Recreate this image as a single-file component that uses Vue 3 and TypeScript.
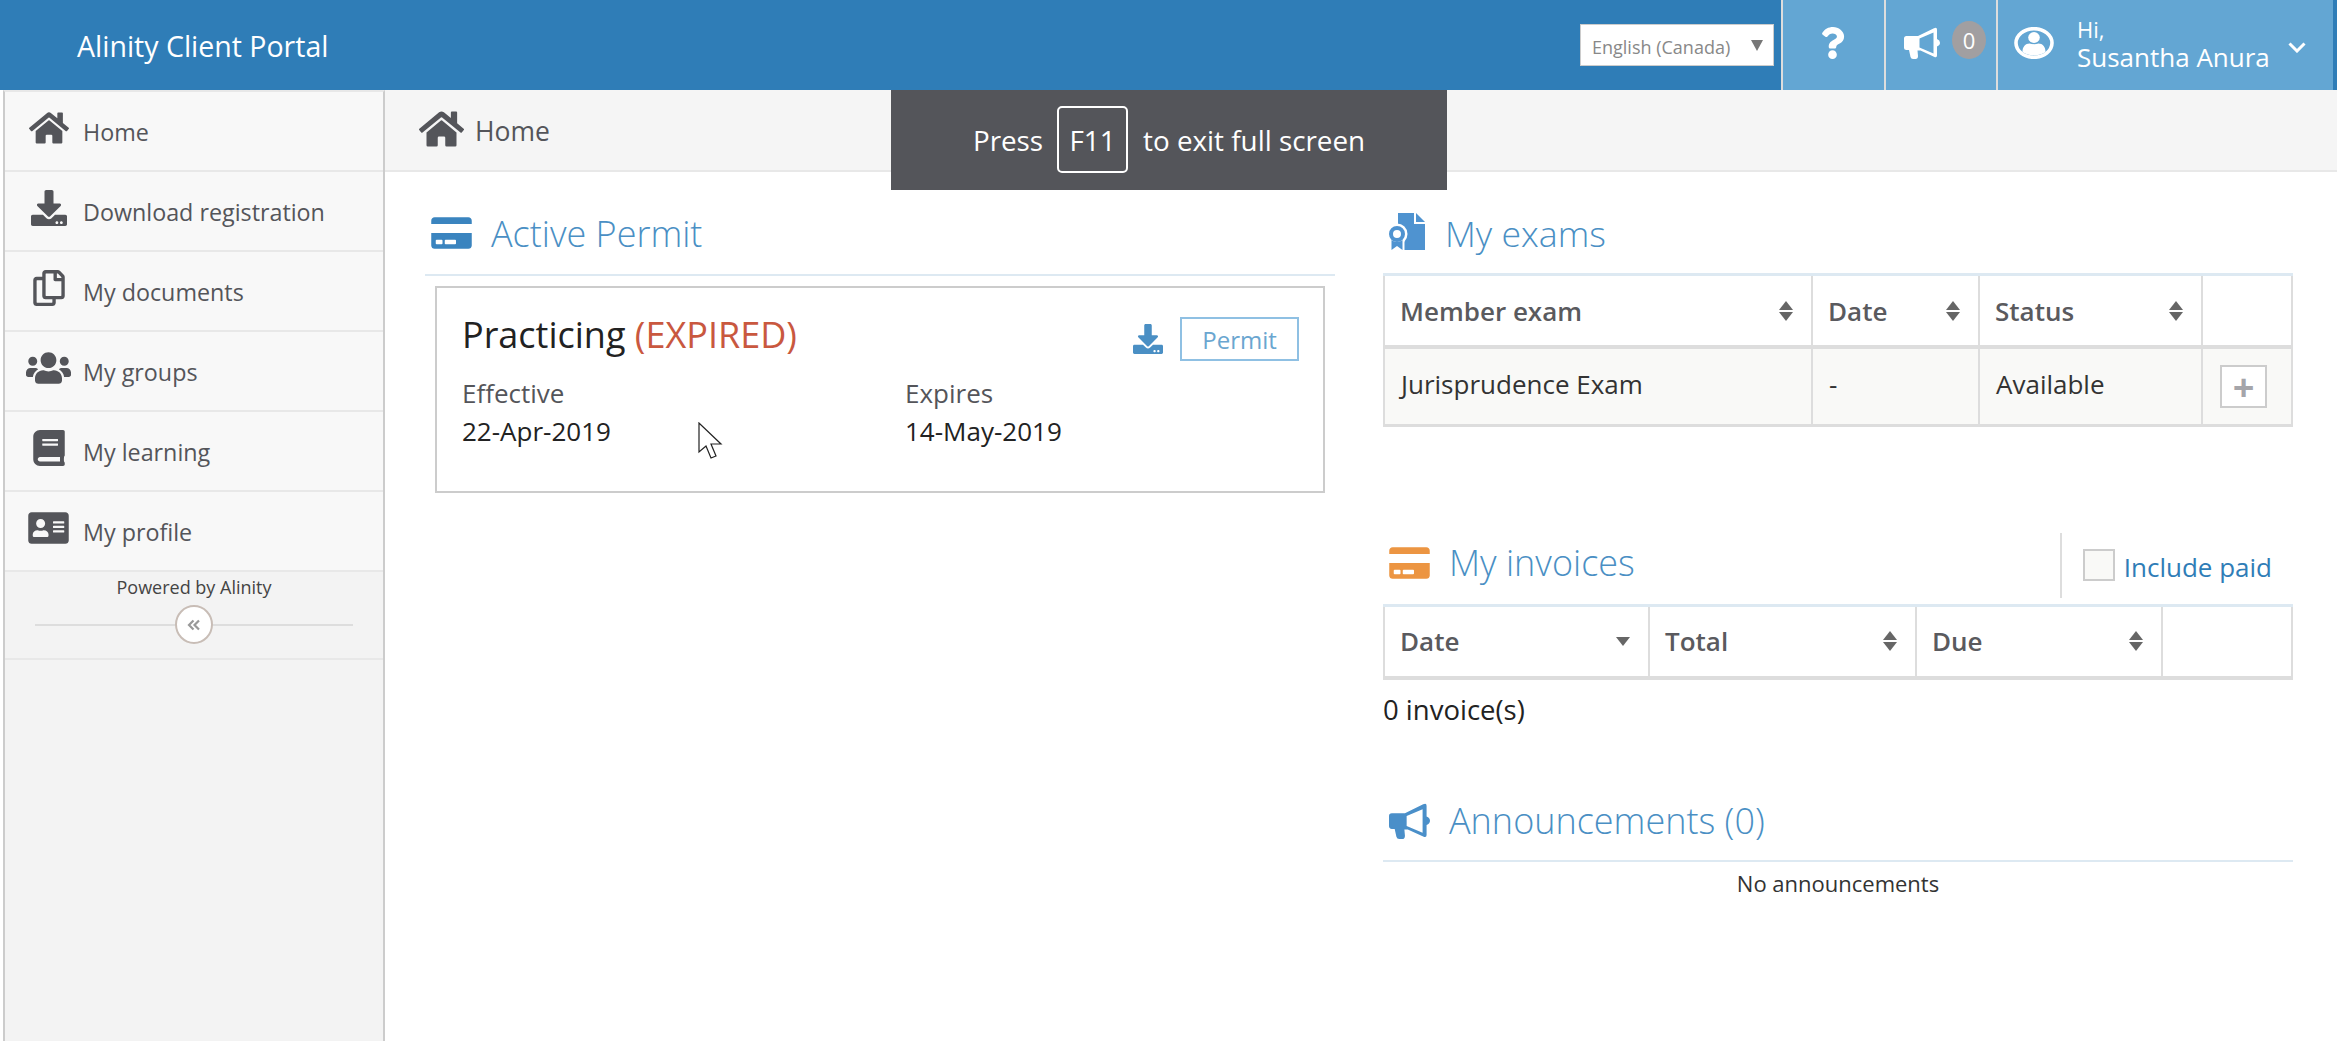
<template>
  <div class="page">
    <header class="topbar">
      <div class="brand">Alinity Client Portal</div>
      <div class="lang">
        <select>
          <option>English (Canada)</option>
        </select>
      </div>
      <div class="top-panel">
        <div class="top-cell help">
          <svg class="ic-help" viewBox="0 0 384 512"><path :d="icons.question" /></svg>
        </div>
        <div class="top-cell notes">
          <svg class="ic-horn" viewBox="0 0 36 32" preserveAspectRatio="none"><path fill-rule="evenodd" :d="horn" /></svg>
          <span class="badge">0</span>
        </div>
        <div class="top-cell user">
          <svg class="ic-user" viewBox="0 0 40 32" preserveAspectRatio="none">
            <ellipse cx="20" cy="16" rx="18" ry="14.300" fill="none" stroke="#fff" stroke-width="3.600" />
            <ellipse cx="20" cy="10.500" rx="5.800" ry="5.400" fill="#fff" />
            <path d="M8.500 25c0-5.500 3-8.500 7-8.500 2.500 1 6.500 1 9 0 4 0 7 3 7 8.500-6.500 4.500-16.500 4.500-23 0z" fill="#fff" />
          </svg>
          <div class="user-name">
            <span>Hi,</span>
            <span>Susantha Anura</span>
          </div>
          <svg class="ic-chev" viewBox="0 0 18 11"><path d="M1.500 1.500 9 9l7.500-7.500" /></svg>
        </div>
      </div>
    </header>

    <div class="body">
      <aside class="sidebar">
        <nav>
          <a v-for="item in menu" :key="item.label" class="nav-item">
            <span class="nav-icon">
              <svg :style="{ width: item.w + 'px' }" :viewBox="item.box"><path :d="item.d" /></svg>
            </span>
            {{ item.label }}
          </a>
        </nav>
        <div class="powered">
          <div>Powered by Alinity</div>
          <div class="collapse">
            <span class="collapse-btn">
              <svg viewBox="0 0 14 12"><path d="M6.500 1.500 2 6l4.500 4.500M12 1.500 7.500 6l4.500 4.500" /></svg>
            </span>
          </div>
        </div>
      </aside>

      <main class="main">
        <div class="crumb">
          <svg class="crumb-icon" viewBox="0 0 576 512"><path :d="icons.home" /></svg>
          Home
        </div>

        <div class="columns">
          <section class="col">
            <div class="head head-line permit-head">
              <svg class="h-icon card" viewBox="0 0 576 512"><path :d="icons.card" /></svg>
              <h2>Active Permit</h2>
            </div>
            <div class="permit">
              <div class="permit-top">
                <div class="permit-name">Practicing <span class="expired">(EXPIRED)</span></div>
                <svg class="permit-dl" viewBox="0 0 512 512"><path :d="icons.download" /></svg>
                <button class="permit-btn">Permit</button>
              </div>
              <div class="permit-dates">
                <div>
                  <div class="lbl">Effective</div>
                  <div class="val">22-Apr-2019</div>
                </div>
                <div>
                  <div class="lbl">Expires</div>
                  <div class="val">14-May-2019</div>
                </div>
              </div>
            </div>
          </section>

          <section class="col">
            <div class="head exams-head">
              <svg class="exam-icon" viewBox="0 0 36 37">
                <path d="M9 0h16v11h11v26H9z" />
                <path d="M27 0l9 9h-9z" />
                <circle cx="8" cy="21" r="10.500" fill="#fff" />
                <path d="M0.500 27h15v10.500h-15z" fill="#fff" />
                <path fill-rule="evenodd" d="M8 13a8 8 0 1 1 0 16 8 8 0 0 1 0-16zm0 4a4 4 0 1 0 0 8 4 4 0 0 0 0-8z" />
                <path d="M2.500 27c3 2.500 8 2.500 11 0v10L8 33l-5.500 4z" />
              </svg>
              <h2>My exams</h2>
            </div>
            <table class="grid exams">
              <colgroup>
                <col style="width: 428px" />
                <col style="width: 167px" />
                <col style="width: 223px" />
                <col />
              </colgroup>
              <thead>
                <tr>
                  <th v-for="h in examCols" :key="h"><div class="th"><span>{{ h }}</span><i class="sort"></i></div></th>
                  <th></th>
                </tr>
              </thead>
              <tbody>
                <tr>
                  <td>Jurisprudence Exam</td>
                  <td>-</td>
                  <td>Available</td>
                  <td class="add-cell"><span class="add">+</span></td>
                </tr>
              </tbody>
            </table>

            <div class="head invoices-head">
              <svg class="h-icon orange" viewBox="0 0 576 512"><path :d="icons.card" /></svg>
              <h2>My invoices</h2>
              <label class="paid"><input type="checkbox" />Include paid</label>
            </div>
            <table class="grid invoices">
              <colgroup>
                <col style="width: 265px" />
                <col style="width: 267px" />
                <col style="width: 246px" />
                <col />
              </colgroup>
              <thead>
                <tr>
                  <th><div class="th"><span>Date</span><i class="sort-down"></i></div></th>
                  <th><div class="th"><span>Total</span><i class="sort"></i></div></th>
                  <th><div class="th"><span>Due</span><i class="sort"></i></div></th>
                  <th></th>
                </tr>
              </thead>
            </table>
            <div class="count">0 invoice(s)</div>

            <div class="head head-line notes-head">
              <svg class="h-icon horn" viewBox="0 0 36 32" preserveAspectRatio="none"><path fill-rule="evenodd" :d="horn" /></svg>
              <h2>Announcements (0)</h2>
            </div>
            <div class="none">No announcements</div>
          </section>
        </div>
      </main>
    </div>

    <!-- browser overlay, sits over the page -->
    <div class="fullscreen-tip">Press <kbd>F11</kbd> to exit full screen</div>

    <svg class="cursor" viewBox="0 0 25 38">
      <path d="M1 1v29l7-6 5 12 5-2-5-12h10z" fill="#fff" stroke="#222" stroke-width="1.200" />
    </svg>
  </div>
</template>

<script setup lang="ts">
const icons = {
  home: 'M280.37 148.26L96 300.11V464a16 16 0 0 0 16 16l112.06-.29a16 16 0 0 0 15.92-16V368a16 16 0 0 1 16-16h64a16 16 0 0 1 16 16v95.64a16 16 0 0 0 16 16.05L464 480a16 16 0 0 0 16-16V300L295.67 148.26a12.19 12.19 0 0 0-15.3 0zM571.6 251.47L488 182.56V44.05a12 12 0 0 0-12-12h-56a12 12 0 0 0-12 12v72.61L318.47 43a48 48 0 0 0-61 0L4.34 251.47a12 12 0 0 0-1.6 16.9l25.5 31A12 12 0 0 0 45.15 301l235.22-193.74a12.19 12.19 0 0 1 15.3 0L530.9 301a12 12 0 0 0 16.9-1.6l25.5-31a12 12 0 0 0-1.7-16.93z',
  download: 'M216 0h80c13.3 0 24 10.7 24 24v168h87.7c17.8 0 26.7 21.5 14.1 34.1L269.7 378.3c-7.5 7.5-19.8 7.5-27.3 0L90.1 226.1c-12.6-12.6-3.7-34.1 14.1-34.1H192V24c0-13.3 10.7-24 24-24zm296 376v112c0 13.3-10.7 24-24 24H24c-13.3 0-24-10.7-24-24V376c0-13.3 10.7-24 24-24h146.7l49 49c20.1 20.1 52.5 20.1 72.6 0l49-49H488c13.3 0 24 10.7 24 24zm-124 88c0-11-9-20-20-20s-20 9-20 20 9 20 20 20 20-9 20-20zm64 0c0-11-9-20-20-20s-20 9-20 20 9 20 20 20 20-9 20-20z',
  copy: 'M433.941 65.941l-51.882-51.882A48 48 0 0 0 348.118 0H176c-26.51 0-48 21.49-48 48v48H48c-26.51 0-48 21.49-48 48v320c0 26.51 21.49 48 48 48h224c26.51 0 48-21.49 48-48v-48h80c26.51 0 48-21.49 48-48V99.882a48 48 0 0 0-14.059-33.941zM266 464H54a6 6 0 0 1-6-6V150a6 6 0 0 1 6-6h74v224c0 26.51 21.49 48 48 48h96v42a6 6 0 0 1-6 6zm128-96H182a6 6 0 0 1-6-6V54a6 6 0 0 1 6-6h106v88c0 13.255 10.745 24 24 24h88v202a6 6 0 0 1-6 6zm6-256h-64V48h9.632c1.591 0 3.117.632 4.243 1.757l48.368 48.368a6 6 0 0 1 1.757 4.243V112z',
  users: 'M96 224c35.3 0 64-28.7 64-64s-28.7-64-64-64-64 28.7-64 64 28.7 64 64 64zm448 0c35.3 0 64-28.7 64-64s-28.7-64-64-64-64 28.7-64 64 28.7 64 64 64zm32 32h-64c-17.6 0-33.5 7.1-45.1 18.6 40.3 22.1 68.9 62 75.1 109.4h66c17.7 0 32-14.3 32-32v-32c0-35.3-28.7-64-64-64zm-256 0c61.9 0 112-50.1 112-112S381.9 32 320 32 208 82.1 208 144s50.1 112 112 112zm76.8 32h-8.3c-20.8 10-43.9 16-68.5 16s-47.6-6-68.5-16h-8.3C179.6 288 128 339.6 128 403.2V432c0 26.5 21.5 48 48 48h288c26.5 0 48-21.5 48-48v-28.8c0-63.6-51.6-115.2-115.2-115.2zm-223.7-13.4C161.5 263.1 145.6 256 128 256H64c-35.3 0-64 28.7-64 64v32c0 17.7 14.3 32 32 32h65.9c6.3-47.4 34.9-87.3 75.2-109.4z',
  book: 'M448 360V24c0-13.3-10.7-24-24-24H96C43 0 0 43 0 96v320c0 53 43 96 96 96h328c13.3 0 24-10.7 24-24v-16c0-7.5-3.5-14.3-8.9-18.7-4.2-15.4-4.2-59.3 0-74.7 5.4-4.3 8.9-11.1 8.9-18.6zM128 134c0-3.3 2.7-6 6-6h212c3.3 0 6 2.7 6 6v20c0 3.3-2.7 6-6 6H134c-3.3 0-6-2.7-6-6v-20zm0 64c0-3.3 2.7-6 6-6h212c3.3 0 6 2.7 6 6v20c0 3.3-2.7 6-6 6H134c-3.3 0-6-2.7-6-6v-20zm253.4 250H96c-17.7 0-32-14.3-32-32 0-17.6 14.4-32 32-32h285.4c-1.9 17.1-1.9 46.9 0 64z',
  profile: 'M528 32H48C21.5 32 0 53.5 0 80v352c0 26.5 21.5 48 48 48h480c26.5 0 48-21.5 48-48V80c0-26.5-21.5-48-48-48zm-352 96c35.3 0 64 28.7 64 64s-28.7 64-64 64-64-28.7-64-64 28.7-64 64-64zm112 236.8c0 10.6-10 19.2-22.4 19.2H86.4C74 384 64 375.4 64 364.8v-19.2c0-31.8 30.1-57.6 67.2-57.6h5c12.3 5.1 25.7 8 39.8 8s27.6-2.9 39.8-8h5c37.1 0 67.2 25.8 67.2 57.6v19.2zM512 312c0 4.4-3.6 8-8 8H360c-4.4 0-8-3.6-8-8v-16c0-4.4 3.6-8 8-8h144c4.4 0 8 3.6 8 8v16zm0-64c0 4.4-3.6 8-8 8H360c-4.4 0-8-3.6-8-8v-16c0-4.4 3.6-8 8-8h144c4.4 0 8 3.6 8 8v16zm0-64c0 4.4-3.6 8-8 8H360c-4.4 0-8-3.6-8-8v-16c0-4.4 3.6-8 8-8h144c4.4 0 8 3.6 8 8v16z',
  card: 'M0 432c0 26.5 21.5 48 48 48h480c26.5 0 48-21.5 48-48V256H0v176zm192-68c0-6.6 5.4-12 12-12h136c6.6 0 12 5.4 12 12v40c0 6.6-5.4 12-12 12H204c-6.6 0-12-5.4-12-12v-40zm-128 0c0-6.6 5.4-12 12-12h72c6.6 0 12 5.4 12 12v40c0 6.6-5.4 12-12 12H76c-6.6 0-12-5.4-12-12v-40zM576 80v48H0V80c0-26.5 21.500-48 48-48h480c26.5 0 48 21.5 48 48z',
  question: 'M202.021 0C122.202 0 70.503 32.703 29.914 91.026c-7.363 10.58-5.093 25.086 5.178 32.874l43.138 32.709c10.373 7.865 25.132 6.026 33.253-4.148 25.049-31.381 43.63-49.449 82.757-49.449 30.764 0 68.816 19.799 68.816 49.631 0 22.552-18.617 34.134-48.993 51.164-35.423 19.86-82.299 44.576-82.299 106.405V320c0 13.255 10.745 24 24 24h72.471c13.255 0 24-10.745 24-24v-5.773c0-42.86 125.268-44.645 125.268-160.627C377.504 66.256 286.902 0 202.021 0zM192 373.459c-38.196 0-69.271 31.075-69.271 69.271 0 38.195 31.075 69.27 69.271 69.27s69.271-31.075 69.271-69.271-31.075-69.27-69.271-69.27z',
}

// the app's megaphone, wider than the usual bullhorn
const horn = 'M2.500 9H14L30 1.200Q33-.3 33 2.500V12q3 1.200 3 3.800T33 19.500V28.500q0 2.800-3 1.300L16.500 23.500H13.500L14 29q0 3-2.500 3H9q-2 0-2.500-2L5 23H2.500Q0 23 0 20.500V11.500Q0 9 2.500 9zM15.500 11.500V20.500L29.500 26.500V5.500z'

const menu = [
  { label: 'Home', d: icons.home, box: '0 0 576 512', w: 40 },
  { label: 'Download registration', d: icons.download, box: '0 0 512 512', w: 36 },
  { label: 'My documents', d: icons.copy, box: '0 0 448 512', w: 32 },
  { label: 'My groups', d: icons.users, box: '0 0 640 512', w: 45 },
  { label: 'My learning', d: icons.book, box: '0 0 448 512', w: 32 },
  { label: 'My profile', d: icons.profile, box: '0 0 576 512', w: 41 },
]

const examCols = ['Member exam', 'Date', 'Status']
</script>

<style>
html,
body {
  margin: 0;
  background: #fff;
}
</style>

<style scoped>
.page {
  position: relative;
  display: flex;
  flex-direction: column;
  height: 1041px;
  overflow: hidden;
  font-family: "Open Sans", "Noto Sans", sans-serif;
  color: #222;
}

/* top bar */
.topbar {
  display: flex;
  align-items: center;
  height: 90px;
  flex: none;
  padding-right: 4px;
  background: #2f7db7;
}
.brand {
  flex: 1;
  padding: 2px 0 0 77px;
  font-size: 28.500px;
  color: #fff;
}
.lang {
  position: relative;
  width: 194px;
  height: 42px;
  margin-right: 7px;
}
.lang select {
  appearance: none;
  width: 100%;
  height: 100%;
  padding: 3px 0 0 11px;
  border: 1px solid #ccc;
  border-radius: 0;
  background: #fff;
  font-family: inherit;
  font-size: 18px;
  color: #888;
}
.lang::after {
  content: "";
  position: absolute;
  top: 16px;
  right: 11px;
  border-left: 6px solid transparent;
  border-right: 6px solid transparent;
  border-top: 11px solid #777;
  pointer-events: none;
}
.top-panel {
  display: flex;
  align-self: stretch;
  width: 552px;
  background: #63a6d3;
  color: #fff;
}
.top-cell {
  display: flex;
  align-items: center;
  border-left: 2px solid #ddd;
}
.help {
  width: 101px;
  justify-content: center;
}
.ic-help {
  width: 25px;
  height: 32px;
  margin: -4px 2px 0 0;
  fill: #fff;
}
.notes {
  width: 112px;
  padding-left: 18px;
  box-sizing: border-box;
}
.ic-horn {
  width: 36px;
  height: 32px;
  fill: #fff;
  margin-top: -4px;
}
.badge {
  display: flex;
  align-items: center;
  justify-content: center;
  width: 34px;
  height: 38px;
  margin: -10px 0 0 12px;
  border-radius: 50%;
  background: #a19fa1;
  font-size: 22px;
}
.user {
  flex: 1;
  padding-left: 16px;
}
.ic-user {
  width: 40px;
  height: 32px;
  margin-top: -5px;
}
.user-name {
  display: flex;
  flex-direction: column;
  margin: -5px 0 0 23px;
  font-size: 26px;
  line-height: 28px;
}
.user-name span:first-child {
  font-size: 22px;
}
.ic-chev {
  width: 18px;
  height: 11px;
  margin: 4px 0 0 18px;
  fill: none;
  stroke: #fff;
  stroke-width: 3;
}

/* sidebar */
.body {
  display: flex;
  flex: 1;
  min-height: 0;
}
.sidebar {
  display: flex;
  flex-direction: column;
  flex: none;
  width: 382px;
  margin-left: 3px;
  box-sizing: border-box;
  border-top: 2px solid #e8e8e8;
  border-left: 2px solid #ccc;
  border-right: 2px solid #ccc;
  background: #f3f3f3;
}
.nav-item {
  display: flex;
  align-items: center;
  height: 80px;
  padding: 2px 0 0 19px;
  box-sizing: border-box;
  border-bottom: 2px solid #e8e8e8;
  background: #f8f8f8;
  font-size: 23.300px;
  color: #54555a;
}
.nav-icon {
  display: flex;
  justify-content: center;
  width: 57px;
  margin: -8px 6px 0 -4px;
}
.nav-icon svg {
  height: 36px;
  fill: #54555a;
}
.powered {
  height: 83px;
  border-bottom: 2px solid #e8e8e8;
  padding-top: 3px;
  text-align: center;
  font-size: 18px;
  line-height: 24px;
  color: #444;
}
.collapse {
  display: flex;
  justify-content: center;
  height: 40px;
  margin: 6px 30px 0;
  background: linear-gradient(#ddd, #ddd) center / 100% 2px no-repeat;
}
.collapse-btn {
  display: flex;
  align-items: center;
  justify-content: center;
  width: 38px;
  height: 39px;
  box-sizing: border-box;
  border: 2px solid #c8bdb6;
  border-radius: 50%;
  background: #fff;
}
.collapse-btn svg {
  width: 14px;
  height: 12px;
  fill: none;
  stroke: #999;
  stroke-width: 2.200;
}

/* main */
.main {
  flex: 1;
  min-width: 0;
}
.crumb {
  display: flex;
  align-items: center;
  height: 82px;
  padding: 2px 0 0 34px;
  box-sizing: border-box;
  border-bottom: 2px solid #e8e8e8;
  background: #f5f5f5;
  font-size: 26.500px;
  color: #54555a;
}
.crumb-icon {
  width: 45px;
  height: 40px;
  margin: -4px 11px 0 0;
  fill: #54555a;
}
.columns {
  display: grid;
  grid-template-columns: 910px 910px;
  gap: 48px;
  padding-left: 40px;
}
.head {
  display: flex;
  align-items: center;
  box-sizing: border-box;
}
h2 {
  margin: 0;
  font-size: 36px;
  font-weight: 300;
  color: #4a8fc4;
}
.head-line {
  border-bottom: 2px solid #dde9f2;
}
.permit-head {
  height: 104px;
  padding: 20px 0 0 6px;
}
.h-icon {
  width: 41px;
  height: 36px;
  margin-right: 19px;
}
.h-icon.card {
  fill: #3a84bf;
}
.h-icon.orange {
  fill: #ec9542;
  margin-right: 19px;
}
.h-icon.horn {
  fill: #4a8fc9;
}

/* permit card */
.permit {
  height: 207px;
  margin: 10px 10px 0;
  padding: 29px 24px 0 25px;
  box-sizing: border-box;
  border: 2px solid #ccc;
}
.permit-top {
  display: flex;
  align-items: center;
}
.permit-name {
  flex: 1;
  margin-top: -8px;
  font-size: 36px;
  line-height: 44px;
}
.expired {
  color: #c9583f;
}
.permit-dl {
  width: 30px;
  height: 30px;
  margin-right: 17px;
  fill: #4a8fc4;
}
.permit-btn {
  width: 119px;
  height: 44px;
  padding: 0;
  border: 2px solid #8fc0e3;
  background: #fff;
  font-family: inherit;
  font-size: 24px;
  color: #6aa6d0;
}
.permit-dates {
  display: grid;
  grid-template-columns: 443px 1fr;
  margin-top: 13px;
}
.lbl {
  font-size: 26px;
  line-height: 38px;
  color: #54555a;
}
.val {
  font-size: 26px;
  line-height: 38px;
  color: #222;
}

/* tables */
.exams-head {
  height: 101px;
  padding: 20px 0 0 6px;
}
.exam-icon {
  width: 36px;
  height: 37px;
  margin: -2px 20px 0 0;
  fill: #4f93d0;
}
.exams-head h2 {
  font-size: 35.700px;
}
.grid {
  width: 910px;
  border-collapse: collapse;
  table-layout: fixed;
  border-top: 3px solid #dde9f2;
  border-left: 2px solid #ddd;
  border-right: 2px solid #ddd;
  font-size: 26px;
}
.grid th {
  height: 69px;
  padding: 0 17px 0 15px;
  border-left: 2px solid #ddd;
  border-bottom: 4px solid #ddd;
  text-align: left;
  font-weight: 600;
  color: #5a5a5e;
}
.grid th:first-child,
.grid td:first-child {
  border-left: 0;
}
.th {
  display: flex;
  align-items: center;
  justify-content: space-between;
}
.sort,
.sort-down {
  display: block;
  width: 15px;
}
.sort::before,
.sort::after {
  content: "";
  display: block;
  width: 0;
  border-left: 7.500px solid transparent;
  border-right: 7.500px solid transparent;
}
.sort::before {
  margin-bottom: 2px;
  border-bottom: 9px solid #666;
}
.sort::after {
  border-top: 9px solid #666;
}
.sort-down::after {
  content: "";
  display: block;
  width: 0;
  border-left: 7.500px solid transparent;
  border-right: 7.500px solid transparent;
  border-top: 9px solid #666;
}
.grid td {
  height: 78px;
  padding: 0 15px 4px 16px;
  box-sizing: border-box;
  border-left: 2px solid #ddd;
  border-bottom: 3px solid #ddd;
  background: #f9f9f7;
  color: #333;
}
.grid td.add-cell {
  padding: 0;
}
.add {
  display: flex;
  align-items: center;
  justify-content: center;
  width: 47px;
  height: 43px;
  margin: 0 0 0 17px;
  box-sizing: border-box;
  border: 2px solid #ccc;
  background: #fff;
  font-size: 38px;
  font-weight: 700;
  color: #a5a5aa;
}
.invoices-head {
  height: 71px;
  margin-top: 106px;
  padding-left: 6px;
}
.invoices-head .h-icon,
.invoices-head h2 {
  margin-bottom: 11px;
}
.paid {
  display: flex;
  align-items: center;
  align-self: flex-start;
  height: 65px;
  box-sizing: border-box;
  margin-left: auto;
  padding: 4px 21px 0 21px;
  border-left: 2px solid #ddd;
  font-size: 26px;
  color: #2f7db7;
}
.paid input {
  appearance: none;
  width: 32px;
  height: 32px;
  margin: 0 9px 4px 0;
  border: 2px solid #ccc;
  background: #f9f9f7;
}
.count {
  margin-top: 12px;
  font-size: 27.500px;
  line-height: 36px;
  color: #222;
}
.notes-head {
  height: 134px;
  padding: 54px 0 0 6px;
}
.none {
  margin-top: 6px;
  text-align: center;
  font-size: 22px;
  line-height: 30px;
  color: #333;
}

/* overlay */
.fullscreen-tip {
  position: absolute;
  top: 90px;
  left: 891px;
  display: flex;
  align-items: center;
  justify-content: center;
  gap: 15px;
  width: 556px;
  height: 100px;
  background: #54555a;
  font-size: 27.800px;
  color: #fff;
}
kbd {
  display: flex;
  align-items: center;
  justify-content: center;
  width: 71px;
  height: 67px;
  margin: -1px 0 0 -1px;
  box-sizing: border-box;
  border: 2px solid #fff;
  border-radius: 5px;
  font-family: inherit;
}
.cursor {
  position: absolute;
  left: 698px;
  top: 422px;
  width: 25px;
  height: 38px;
}
</style>
